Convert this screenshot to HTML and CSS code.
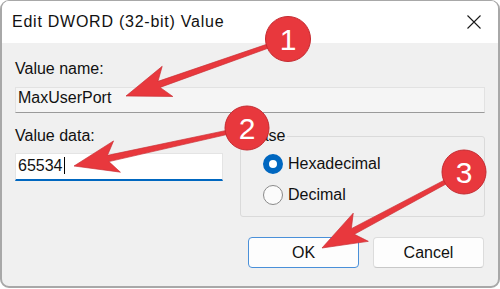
FILE: index.html
```html
<!DOCTYPE html>
<html>
<head>
<meta charset="utf-8">
<link rel="stylesheet" href="styles.css">
</head>
<body>
<div class="window">
  <div class="titlebar">
    <span class="title">Edit DWORD (32-bit) Value</span>
    <svg class="close" width="14" height="14" viewBox="0 0 14 14"><path d="M0.5 0.5 L13.5 13.5 M13.5 0.5 L0.5 13.5" stroke="#1a1a1a" stroke-width="1.1" fill="none"/></svg>
  </div>
  <div class="content">
    <div class="label">Value name:</div>
    <div class="textbox readonly">MaxUserPort</div>
    <div class="row">
      <div class="col-left">
        <div class="label">Value data:</div>
        <div class="textbox edit"><span>65534</span><span class="caret"></span></div>
      </div>
      <div class="group">
        <span class="legend">Base</span>
        <div class="radio-row"><span class="radio checked"></span><span>Hexadecimal</span></div>
        <div class="radio-row"><span class="radio"></span><span>Decimal</span></div>
      </div>
    </div>
    <div class="buttons">
      <div class="btn primary">OK</div>
      <div class="btn">Cancel</div>
    </div>
  </div>
</div>
<svg class="annotations" width="500" height="289" viewBox="0 0 500 289">
  <g class="arrow">
    <polygon transform="translate(126,96) rotate(-19.38)" points="0,0 44,-16 35,-3.2 160,-2 160,2 35,3.2 44,16"/>
    <polygon transform="translate(74,166) rotate(-12.39)" points="0,0 44,-16 35,-3.2 165,-2 165,2 35,3.2 44,16"/>
    <polygon transform="translate(322,248) rotate(-28.16)" points="0,0 44,-16 35,-3.2 150,-2 150,2 35,3.2 44,16"/>
  </g>
  <g class="badge">
    <circle cx="288" cy="39" r="22.5"/>
    <text x="288" y="50">1</text>
  </g>
  <g class="badge">
    <circle cx="247" cy="128" r="22"/>
    <text x="247" y="139">2</text>
  </g>
  <g class="badge">
    <circle cx="464" cy="172" r="22"/>
    <text x="464" y="183">3</text>
  </g>
</svg>
</body>
</html>
```
FILE: styles.css
```css
html, body {
  margin: 0;
  padding: 0;
  background: #ffffff;
}
body {
  position: relative;
  width: 500px;
  height: 289px;
  overflow: hidden;
  font-family: "Liberation Sans", Arial, sans-serif;
  font-size: 16px;
  color: #111111;
}
.window {
  box-sizing: border-box;
  width: 500px;
  height: 288px;
  border: 2px solid #a8a8a8;
  border-top-width: 1px;
  border-radius: 9px;
  overflow: hidden;
  background: #f0f0f0;
  display: flex;
  flex-direction: column;
}
.titlebar {
  height: 42px;
  background: #ffffff;
  display: flex;
  align-items: center;
  padding: 0 17px 0 10px;
  flex: none;
}
.title {
  font-size: 16px;
  letter-spacing: 0.75px;
  line-height: 20px;
}
.close {
  margin-left: auto;
  display: block;
}
.content {
  padding: 16px 13px 0 13px;
  display: flex;
  flex-direction: column;
}
.label {
  line-height: 20px;
  height: 20px;
}
.textbox {
  box-sizing: border-box;
  line-height: 20px;
  padding: 0 2px;
}
.readonly {
  margin-top: 8px;
  height: 26px;
  background: #f5f5f5;
  border: 1px solid #e2e2e2;
  border-bottom-color: #9a9a9a;
}
.row {
  display: flex;
  margin-top: 13px;
}
.col-left {
  width: 208px;
  flex: none;
}
.edit {
  margin-top: 7px;
  height: 28px;
  background: #ffffff;
  border: 1px solid #e4e4e4;
  border-bottom: 2px solid #0067c0;
  padding-top: 2px;
  display: flex;
  align-items: flex-start;
}
.caret {
  display: inline-block;
  width: 1px;
  height: 17px;
  background: #000;
  margin-left: 1px;
  margin-top: 1px;
}
.group {
  position: relative;
  flex: 1;
  box-sizing: border-box;
  margin-left: 17px;
  margin-top: 10px;
  height: 81px;
  border: 1px solid #dadada;
  border-radius: 3px;
  padding: 17px 0 0 22px;
  display: flex;
  flex-direction: column;
  gap: 11px;
}
.legend {
  position: absolute;
  left: 6px;
  top: -11px;
  line-height: 20px;
  padding: 0 2px;
  background: #f0f0f0;
}
.radio-row {
  display: flex;
  align-items: center;
  height: 20px;
  gap: 5px;
}
.radio {
  box-sizing: border-box;
  width: 20px;
  height: 20px;
  border-radius: 50%;
  border: 1px solid #8a8a8a;
  background: #fbfbfb;
  flex: none;
}
.radio.checked {
  border: 6px solid #0067c0;
  background: #ffffff;
}
.buttons {
  display: flex;
  justify-content: flex-end;
  gap: 14px;
  margin-top: 20px;
  padding-right: 1px;
}
.btn {
  box-sizing: border-box;
  width: 111px;
  height: 31px;
  border: 1px solid #dcdcdc;
  border-bottom-color: #c8c8c8;
  border-radius: 4px;
  background: #fdfdfd;
  display: flex;
  align-items: center;
  justify-content: center;
  line-height: 20px;
}
.btn.primary {
  border: 1px solid #4a90d9;
}
.annotations {
  position: absolute;
  left: 0;
  top: 0;
  pointer-events: none;
}
.arrow polygon {
  fill: #e8383d;
  stroke: #c92d33;
  stroke-width: 0.6;
  stroke-linejoin: round;
}
.badge circle {
  fill: #e8383d;
  stroke: #c42a30;
  stroke-width: 1;
}
.badge text {
  fill: #ffffff;
  font-family: "Liberation Sans", Arial, sans-serif;
  font-size: 30px;
  text-anchor: middle;
}
```
